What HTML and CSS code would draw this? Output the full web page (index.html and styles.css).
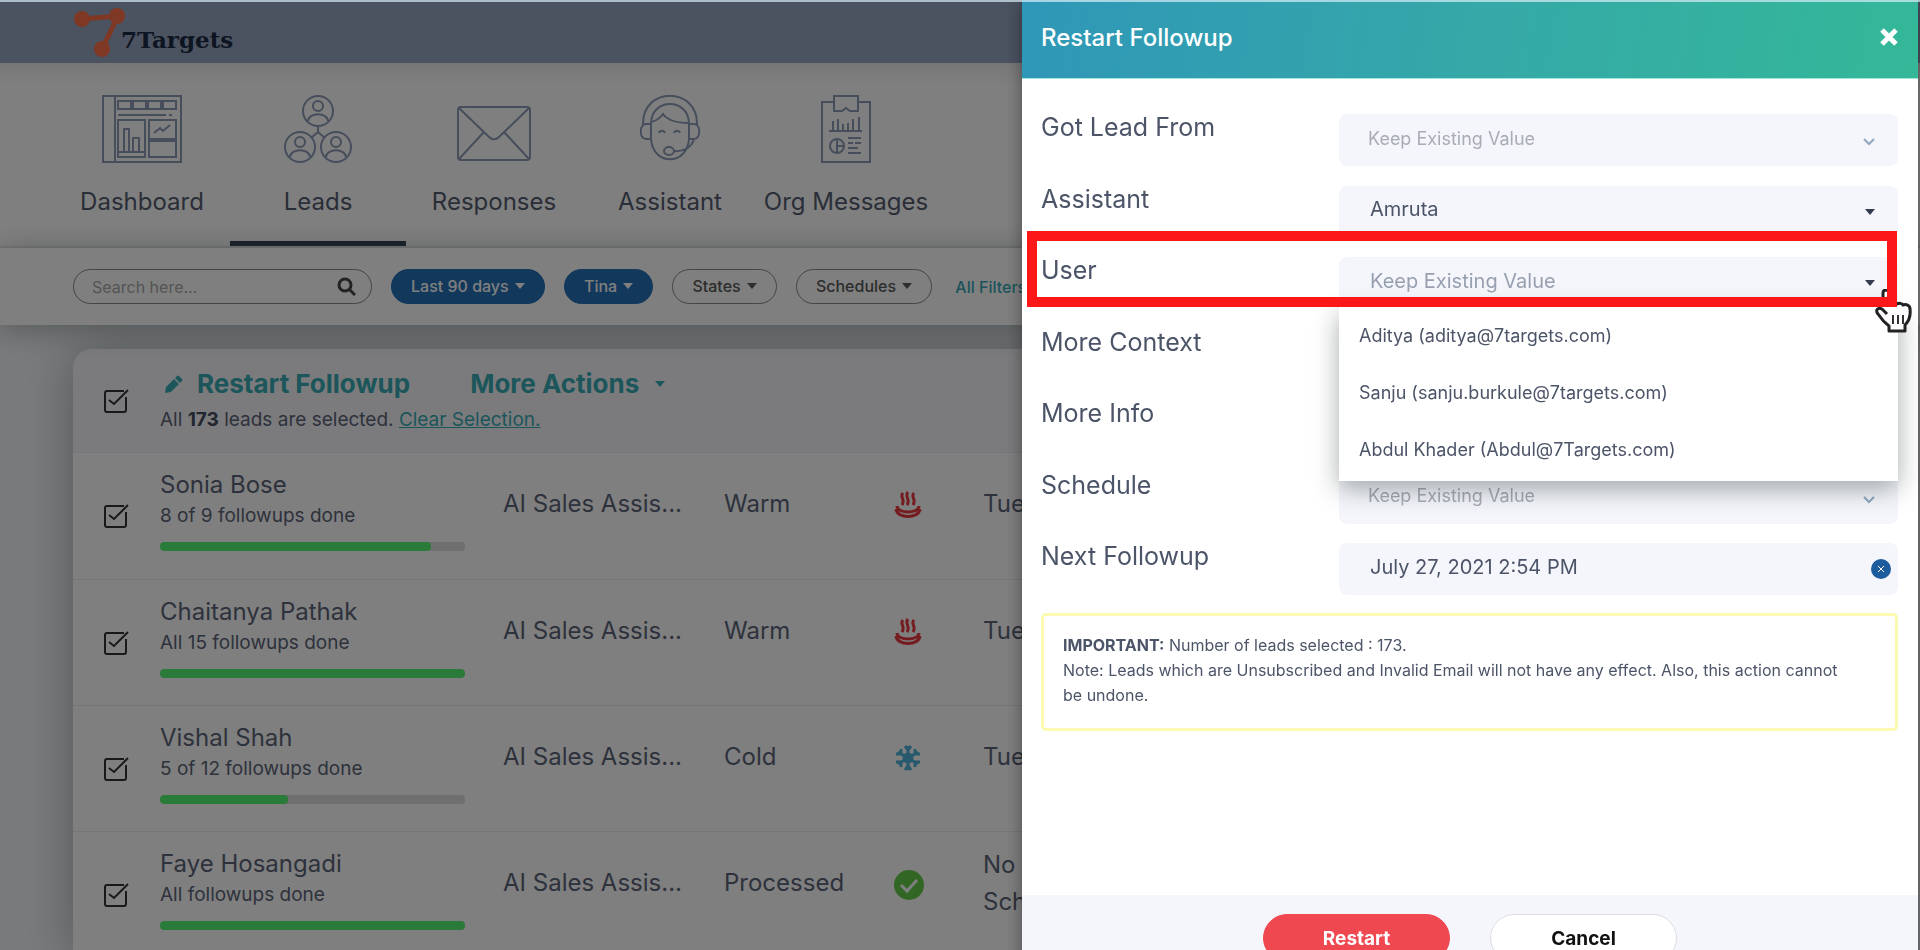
FILE: index.html
```html
<!DOCTYPE html>
<html lang="en">
<head>
<meta charset="utf-8">
<title>7Targets - Leads</title>
<link rel="stylesheet" href="styles.css">
</head>
<body>
<div class="page">
  <header class="topbar">
    <a class="logo" href="#">
      <svg class="logo-mark" width="52" height="50" viewBox="0 0 52 50" aria-hidden="true">
        <path d="M8 12 44 9 28 42" fill="none" stroke="currentColor" stroke-width="5"/>
        <circle cx="8" cy="12" r="8" fill="currentColor"/><circle cx="43" cy="9" r="8" fill="currentColor"/><circle cx="28" cy="42" r="8" fill="currentColor"/>
      </svg>
      <span class="logo-text">7Targets</span>
    </a>
  </header>

  <nav class="mainnav">
    <a class="nav-item" href="#">
      <svg class="nav-icon" width="80" height="68" viewBox="0 0 80 68"><path d="M1 1h78v66H1zM13 1v66M16 6h13v8H16zM31 6h13v8H31zM46 6h13v8H46zM61 6h13v8H61zM16 20h48M67 20h3M16 25h27v37H16zM47 25h27v19H47zM47 46h27v16H47zM22 57V34h5v23M31 57V43h6v14M16 57h27M52 38l6-5 3 3 7-6"/></svg>
      <span>Dashboard</span>
    </a>
    <a class="nav-item active" href="#">
      <svg class="nav-icon" width="68" height="68" viewBox="0 0 68 68"><circle cx="34" cy="16" r="15"/><circle cx="34" cy="11" r="5"/><path d="M24 26c1-9 19-9 20 0"/><circle cx="16" cy="52" r="15"/><circle cx="16" cy="47" r="5"/><path d="M6 62c1-9 19-9 20 0"/><circle cx="52" cy="52" r="15"/><circle cx="52" cy="47" r="5"/><path d="M42 62c1-9 19-9 20 0M34 31v7M27 43l7-6 7 6"/></svg>
      <span>Leads</span>
    </a>
    <a class="nav-item" href="#">
      <svg class="nav-icon" width="74" height="68" viewBox="0 0 74 68"><rect x="1" y="12" width="72" height="53" rx="3"/><path d="M2 13l30 29c3 3 7 3 10 0l30-29M2 64l25-27M72 64L47 37"/></svg>
      <span>Responses</span>
    </a>
    <a class="nav-item" href="#">
      <svg class="nav-icon" width="60" height="68" viewBox="0 0 60 68"><path d="M3 30C2-9 58-9 57 30M11 30C10 2 50 2 49 30M11 30v14c2 27 36 27 38 0V30M11 27c5-1 9-4 12-8 5 7 15 9 26 9M11 29H6c-7 0-7 15 0 15h5zM49 29h5c7 0 7 15 0 15h-5zM19 38c1-3 5-3 6 0M34 38c1-3 5-3 6 0M34 56c10 1 18-4 20-12"/><ellipse cx="29" cy="56" rx="5" ry="4"/></svg>
      <span>Assistant</span>
    </a>
    <a class="nav-item" href="#">
      <svg class="nav-icon" width="50" height="68" viewBox="0 0 50 68"><path d="M13 7H1v60h48V7H37M13 1h24v15h-8l-4-3-4 3h-8zM8 36h33M12 35v-9M17 35V24M22 35v-6M27 35v-7M32 35V24M38 35V22M27 43h13M27 48h5M34 48h6M27 53h10M27 58h13"/><circle cx="16" cy="51" r="7"/><path d="M16 44v14M16 51h7"/></svg>
      <span>Org Messages</span>
    </a>
  </nav>

  <div class="filters">
    <div class="search">
      <input type="text" placeholder="Search here..." aria-label="Search leads">
      <button class="search-btn" aria-label="Search"><svg width="19" height="19" viewBox="0 0 19 19"><circle cx="8" cy="8" r="6" fill="none" stroke="currentColor" stroke-width="3"/><path d="M12 12l6 6" stroke="currentColor" stroke-width="3"/></svg></button>
    </div>
    <button class="pill on">Last 90 days <i class="caret"></i></button>
    <button class="pill on">Tina <i class="caret"></i></button>
    <button class="pill">States <i class="caret"></i></button>
    <button class="pill">Schedules <i class="caret"></i></button>
    <a class="all-filters" href="#">All Filters</a>
  </div>

  <main class="content">
    <section class="card">
      <div class="card-head">
        <input class="tick" type="checkbox" checked aria-label="Select all leads">
        <div class="card-title">
          <div class="actions">
            <button class="action"><svg width="18" height="18" viewBox="0 0 18 18"><path d="M0 18l1-6L9 4l5 5L6 17zM10 3l2-2q1-1 2 0l3 3q1 1 0 2l-2 2z" fill="currentColor"/></svg>Restart Followup</button>
            <button class="action more">More Actions <i class="caret"></i></button>
          </div>
          <p class="selection">All <b>173</b> leads are selected. <a href="#">Clear Selection.</a></p>
        </div>
      </div>
      <table class="leads">
        <colgroup><col class="c-tick"><col class="c-name"><col class="c-asst"><col class="c-state"><col class="c-icon"><col></colgroup>
        <tbody>
        <tr>
          <td><input class="tick" type="checkbox" checked aria-label="Sonia Bose"></td>
          <td><div class="name">Sonia Bose</div><div class="sub">8 of 9 followups done</div><div class="bar"><div class="fill" style="width:89%"></div></div></td>
          <td>AI Sales Assis...</td><td>Warm</td>
          <td><svg class="hot" width="28" height="28" viewBox="0 0 28 28"><path d="M3 15c0 8 22 8 22 0M2 18c1 10 23 10 24 0" /><path d="M9 2c-4 4 3 6-1 12M14 1c-4 4 3 8-1 13M20 2c-4 4 3 6-1 12"/></svg></td>
          <td>Tue</td>
        </tr>
        <tr>
          <td><input class="tick" type="checkbox" checked aria-label="Chaitanya Pathak"></td>
          <td><div class="name">Chaitanya Pathak</div><div class="sub">All 15 followups done</div><div class="bar"><div class="fill" style="width:100%"></div></div></td>
          <td>AI Sales Assis...</td><td>Warm</td>
          <td><svg class="hot" width="28" height="28" viewBox="0 0 28 28"><path d="M3 15c0 8 22 8 22 0M2 18c1 10 23 10 24 0" /><path d="M9 2c-4 4 3 6-1 12M14 1c-4 4 3 8-1 13M20 2c-4 4 3 6-1 12"/></svg></td>
          <td>Tue</td>
        </tr>
        <tr>
          <td><input class="tick" type="checkbox" checked aria-label="Vishal Shah"></td>
          <td><div class="name">Vishal Shah</div><div class="sub">5 of 12 followups done</div><div class="bar"><div class="fill" style="width:42%"></div></div></td>
          <td>AI Sales Assis...</td><td>Cold</td>
          <td><svg class="cold" width="28" height="28" viewBox="0 0 28 28"><path d="M14 2v24M4 8l20 12M4 20L24 8"/><circle cx="14" cy="14" r="4"/><path d="M11 2l3 4 3-4M11 26l3-4 3 4M2 10l5 0 0-5M26 18h-5v5M2 18h5v5M26 10h-5V5"/></svg></td>
          <td>Tue</td>
        </tr>
        <tr>
          <td><input class="tick" type="checkbox" checked aria-label="Faye Hosangadi"></td>
          <td><div class="name">Faye Hosangadi</div><div class="sub">All followups done</div><div class="bar"><div class="fill" style="width:100%"></div></div></td>
          <td>AI Sales Assis...</td><td>Processed</td>
          <td><svg class="done" width="30" height="30" viewBox="0 0 30 30"><circle cx="15" cy="15" r="15" fill="#62cc48"/><path d="M7 15l6 6 10-11" fill="none" stroke="#fff" stroke-width="3"/></svg></td>
          <td>No<br>Schedule</td>
        </tr>
        </tbody>
      </table>
    </section>
  </main>
</div>

<div class="backdrop"></div>

<aside class="drawer">
  <header class="drawer-head">
    <h2>Restart Followup</h2>
    <button class="close" aria-label="Close"><svg width="18" height="18" viewBox="0 0 18 18"><path d="M2 2l14 14M16 2L2 16" stroke="currentColor" stroke-width="5"/></svg></button>
  </header>
  <form class="drawer-body">
    <div class="fields">
      <div class="row"><label for="from">Got Lead From</label><select id="from" class="ctl native"><option>Keep Existing Value</option></select></div>
      <div class="row"><label for="assistant">Assistant</label><select id="assistant" class="ctl solid"><option>Amruta</option></select></div>
      <div class="row user">
        <label for="user">User</label><select id="user" class="ctl solid unset"><option>Keep Existing Value</option></select>
        <ul class="menu">
          <li><button type="button">Aditya (aditya@7targets.com)</button></li>
          <li><button type="button">Sanju (sanju.burkule@7targets.com)</button></li>
          <li><button type="button">Abdul Khader (Abdul@7Targets.com)</button></li>
        </ul>
        <svg class="pointer" width="38" height="46" viewBox="0 0 38 46"><path d="M8 16V4c0-4 6-4 6 0v12l2-2c3-2 5 0 6 1 2-1 5-1 6 1 3-1 7 0 7 4 1 8-1 12-5 16v6H14v-5C10 34 5 28 3 25c-3-4 0-7 4-5l5 5" fill="#fff" stroke="#222" stroke-width="3" stroke-linejoin="round"/><path d="M18 26v9M23 26v9M28 26v9" stroke="#333" stroke-width="2"/></svg>
        <div class="highlight"></div>
      </div>
      <div class="row"><label for="context">More Context</label><input id="context" class="ctl" type="text"></div>
      <div class="row"><label for="info">More Info</label><input id="info" class="ctl" type="text"></div>
      <div class="row"><label for="schedule">Schedule</label><select id="schedule" class="ctl native"><option>Keep Existing Value</option></select></div>
      <div class="row date"><label for="next">Next Followup</label><input id="next" class="ctl" type="text" value="July 27, 2021 2:54 PM"><button type="button" class="clear" aria-label="Clear date"><svg width="6" height="6" viewBox="0 0 6 6"><path d="M0 0l6 6M6 0L0 6" stroke="currentColor"/></svg></button></div>
    </div>
    <p class="note"><b>IMPORTANT:</b> Number of leads selected : 173.<br>Note: Leads which are Unsubscribed and Invalid Email will not have any effect. Also, this action cannot be undone.</p>
  </form>
  <footer class="drawer-foot">
    <button class="btn primary">Restart</button>
    <button class="btn">Cancel</button>
  </footer>
</aside>
</body>
</html>
```
FILE: styles.css
```css
* { box-sizing: border-box; }
body {
  margin: 0;
  height: 100vh;
  overflow: hidden;
  font-family: Inter, "Open Sans", sans-serif;
  font-size: 24px;
  color: #5c6478;
  background: #f2f5f8;
}
body::before {
  content: "";
  position: fixed;
  inset: 0 0 auto 0;
  height: 2px;
  background: #d8eef8;
  opacity: 0.7;
  z-index: 10;
}
button, input, select { font: inherit; color: inherit; border: 0; background: none; padding: 0; margin: 0; }
p, h2, ul { margin: 0; padding: 0; }
ul { list-style: none; }
.page { height: 100vh; overflow: hidden; }

.caret {
  display: inline-block;
  border: 5px solid transparent;
  border-top: 6px solid currentColor;
  border-bottom: 0;
  margin-left: 2px;
  vertical-align: 3px;
}

/* Top bar */
.topbar { height: 63px; padding: 7px 74px; background: #96a4c0; }
.logo { display: inline-flex; align-items: flex-start; text-decoration: none; color: #ff7048; }
.logo-text {
  font-family: "DejaVu Serif", serif;
  font-size: 23px;
  font-weight: 700;
  line-height: 30px;
  margin: 18px 0 0 -5px;
  color: #1c2a44;
}

/* Navigation */
.mainnav {
  display: flex;
  height: 185px;
  padding: 0 54px;
  background: linear-gradient(#efefef, #fff 24px);
  border-bottom: 2px solid #ececec;
}
.nav-item {
  display: flex;
  flex-direction: column;
  align-items: center;
  gap: 22px;
  width: 176px;
  padding-top: 32px;
  line-height: 34px;
  white-space: nowrap;
  text-decoration: none;
  color: #545c70;
  border-bottom: 5px solid transparent;
}
.nav-item.active { border-bottom-color: #3c4858; }
.nav-icon { fill: none; stroke: #8c9ab6; stroke-width: 2; }

/* Filters */
.filters {
  position: relative;
  display: flex;
  align-items: center;
  height: 77px;
  padding: 0 73px;
  background: #fff;
  font-size: 16px;
  box-shadow: 0 4px 30px rgba(0, 20, 20, 0.3);
}
.search {
  display: flex;
  align-items: center;
  justify-content: space-between;
  width: 299px;
  height: 35px;
  margin-right: 19px;
  padding: 0 15px 0 18px;
  border: 1px solid #8a8a8a;
  border-radius: 18px;
}
.search input { width: 200px; outline: 0; }
.search input::placeholder { color: #a8a8a8; }
.search-btn { display: flex; color: #444; }
.pill {
  height: 35px;
  margin-right: 19px;
  padding: 0 19px 2px;
  border: 1px solid #8a8a8a;
  border-radius: 18px;
  color: #5a5a5a;
  font-weight: 500;
  white-space: nowrap;
}
.pill.on { background: #2470b8; border-color: #2470b8; color: #fff; }
.all-filters { margin-left: 4px; color: #38a8b4; font-weight: 500; text-decoration: none; }

/* Lead list */
.content { padding: 24px 73px; }
.card {
  border-radius: 20px 20px 0 0;
  overflow: hidden;
  background: #fff;
  box-shadow: 0 0 50px rgba(0, 20, 20, 0.3);
}
.card-head {
  display: grid;
  grid-template-columns: 87px 1fr;
  align-items: center;
  height: 104px;
  background: #f7f7fb;
  border-bottom: 1px solid #eaeaf4;
}
.card-title { padding-top: 4px; }
.tick {
  display: block;
  appearance: none;
  width: 26px;
  height: 26px;
  margin-left: 30px;
  background: url("data:image/svg+xml,%3Csvg xmlns='http://www.w3.org/2000/svg' width='26' height='26' fill='none' stroke='%23333' stroke-width='2'%3E%3Cpath d='M21 3H4Q2 3 2 5V22Q2 24 4 24H21Q23 24 23 22V9M6 12l5 4L25 2'/%3E%3C/svg%3E");
}
.actions { display: flex; gap: 60px; padding-left: 5px; }
.action { display: flex; align-items: center; gap: 14px; font-size: 26px; font-weight: 700; line-height: 34px; color: #38acb4; white-space: nowrap; }
.selection { font-size: 19px; line-height: 38px; }
.selection b { color: #444c60; }
.selection a { color: #38acb4; }

.leads { width: 100%; table-layout: fixed; border-collapse: collapse; }
.c-tick { width: 87px; }
.c-name { width: 343px; }
.c-asst { width: 221px; }
.c-state { width: 170px; }
.c-icon { width: 89px; }
.leads td { height: 126px; padding: 32px 0 0; line-height: 37px; vertical-align: top; border-bottom: 1px solid #ececf0; }
.leads td:nth-child(1) { padding-top: 50px; }
.leads td:nth-child(2) { padding-top: 15px; }
.leads td:nth-child(5) { padding-top: 38px; }
.leads tr:last-child td:last-child { padding-top: 14px; }
.leads svg { display: block; }
.name { line-height: 34px; }
.sub { font-size: 19px; line-height: 28px; }
.bar { width: 305px; height: 9px; margin-top: 12px; border-radius: 4px; background: #dedede; overflow: hidden; }
.fill { height: 100%; border-radius: 4px; background: #54f474; }
.hot { fill: none; stroke: #e83840; stroke-width: 3; }
.cold { fill: none; stroke: #50b4dc; stroke-width: 3; }

.backdrop { position: fixed; inset: 0; background: rgba(0, 0, 0, 0.5); }

/* Drawer */
.drawer {
  position: fixed;
  top: 0;
  right: 2px;
  bottom: -31px;
  width: 896px;
  max-width: 100%;
  display: flex;
  flex-direction: column;
  background: #fff;
  color: #4c5468;
  box-shadow: 0 0 16px rgba(0, 0, 0, 0.4);
}
.drawer-head {
  display: flex;
  align-items: center;
  justify-content: space-between;
  height: 79px;
  padding: 0 20px 4px 19px;
  color: #fff;
  background: linear-gradient(100deg, #2f97b8, #35a8a8 50%, #34b898);
  border-bottom: 1px solid #a0e4dc;
}
.drawer-head h2 { font-size: 24px; font-weight: 500; }
.close { display: flex; }
.drawer-body { flex: 1; padding: 35px 20px 0 19px; }
.fields { display: grid; align-content: space-between; min-height: 481px; }
.row { position: relative; display: grid; grid-template-columns: 298px 1fr; height: 52px; line-height: 26px; font-size: 25px; }
.ctl {
  width: 100%;
  height: 52px;
  padding: 0 60px 5px 31px;
  border-radius: 8px;
  font-size: 20px;
  background: #f4f6fb;
  appearance: none;
  outline: 0;
}
.native {
  padding: 0 60px 3px 29px;
  font-size: 18px;
  color: #a8acb4;
  background: #f4f6fb url("data:image/svg+xml,%3Csvg xmlns='http://www.w3.org/2000/svg' width='12' height='8' fill='none' stroke='%2390a8c0' stroke-width='2'%3E%3Cpath d='M1 1l5 5 5-5'/%3E%3C/svg%3E") no-repeat right 23px top 24px;
}
.solid { background: #f4f6fb url("data:image/svg+xml,%3Csvg xmlns='http://www.w3.org/2000/svg' width='10' height='6'%3E%3Cpath d='M0 0h10L5 6z' fill='%23333c4c'/%3E%3C/svg%3E") no-repeat right 23px top 23px; }
.unset { color: #98a0b0; }
.row.user { z-index: 2; }
.menu {
  position: absolute;
  top: 50px;
  right: 0;
  left: 298px;
  padding-bottom: 3px;
  background: #fff;
  box-shadow: 0 8px 24px rgba(0, 20, 20, 0.35);
}
.menu button { display: block; width: 100%; height: 57px; padding: 0 20px; text-align: left; font-size: 18px; }
.highlight { position: absolute; inset: -26px 1px 2px -14px; border: 10px solid #fc1818; pointer-events: none; }
.pointer { position: absolute; right: -15px; top: 32px; }
.clear {
  position: absolute;
  right: 7px;
  top: 16px;
  display: flex;
  align-items: center;
  justify-content: center;
  width: 20px;
  height: 20px;
  border-radius: 10px;
  background: #1c5c9c;
  color: #fff;
}
.note {
  margin-top: 18px;
  min-height: 118px;
  padding: 17px 40px 17px 19px;
  border: 3px solid #fafab0;
  border-radius: 5px;
  font-size: 16px;
  line-height: 25px;
}
.drawer-foot { display: flex; justify-content: center; gap: 40px; padding: 19px; background: #f4f6fb; }
.btn { width: 187px; height: 48px; border: 1px solid #dcdee4; border-radius: 24px; background: #fff; color: #111; font-size: 19px; font-weight: 700; }
.btn.primary { background: #f04850; border-color: #f04850; color: #fff; }
```
